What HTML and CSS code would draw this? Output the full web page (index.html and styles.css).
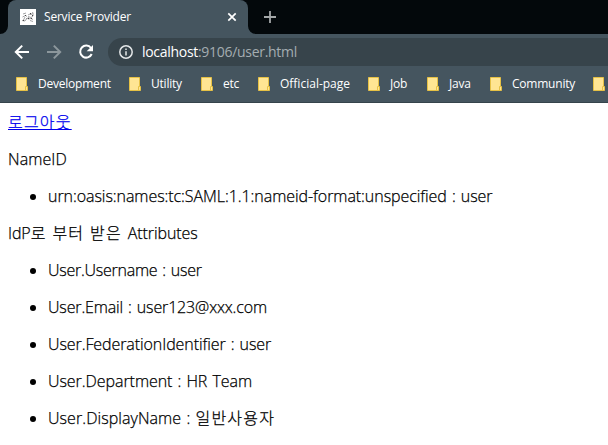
FILE: index.html
```html
<!DOCTYPE html>
<html lang="ko">
<head>
<meta charset="utf-8">
<title>Service Provider</title>
<link rel="stylesheet" href="styles.css">
</head>
<body>
<svg class="defs" width="0" height="0" aria-hidden="true">
  <symbol id="folder" viewBox="0 0 12 14">
    <path d="M.5.5h10v9h1v4H.5z" fill="#ffe593" stroke="#e6c145"/>
    <path d="M9.5 13v-3.5h1.5" fill="none" stroke="#e6c145"/>
  </symbol>
</svg>
<header class="browser">
  <div class="tabs">
    <svg class="curve" viewBox="0 0 8 8"><path d="M8 0v8H0a8 8 0 0 0 8-8z"/></svg>
    <div class="tab">
      <svg class="favicon" viewBox="0 0 16 16">
        <path fill="#fff" d="M0 0h16v16H0z"/>
        <g fill="none" stroke="#8b8b8e" stroke-width=".8">
          <path d="M3 5l3-1M2.500 8l3-1.500 1.500 1M5 8l-1.500 3M2 11.500l3 .5 2-3M8 6l2-1 1 1 2-3M13 4v3l-2 1.500-3-1M8 10l3-.5 2 1M10 11.500l3 1M6 10l3-1.500"/>
        </g>
        <path d="M5 6h1v1H5zM10 4h1v1h-1zM8 9h1v1H8zM3 11h1v1H3zM12 6h1v1h-1zM11 9h1v1h-1z" fill="#444"/>
      </svg>
      <span class="tab-title">Service Provider</span>
      <svg class="close" viewBox="0 0 10 10"><path d="M1.3 1.3l7.4 7.4M8.7 1.3L1.3 8.7"/></svg>
    </div>
    <svg class="curve" viewBox="0 0 8 8"><path d="M0 0v8h8a8 8 0 0 1-8-8z"/></svg>
    <svg class="plus" viewBox="0 0 12 12"><path d="M6 0v12M0 6h12"/></svg>
  </div>
  <div class="toolbar">
    <svg class="nav" viewBox="0 0 16 16"><path d="M15 8H2M8.2 1.6L1.8 8l6.4 6.4"/></svg>
    <svg class="nav dim" viewBox="0 0 16 16"><path d="M1 8h13M7.8 1.6L14.2 8l-6.4 6.4"/></svg>
    <svg class="nav" viewBox="0 0 16 16"><path d="M13 4A6 6 0 1 0 13.7 10"/><path class="solid" d="M15 1v6.300H8.700z"/></svg>
    <div class="address">
      <svg class="info" viewBox="0 0 14 14"><circle cx="7" cy="7" r="6.2"/><path d="M7 6.200v4.200M7 3.400v1.600"/></svg>
      <span class="url"><span class="host">localhost</span>:9106/user.html</span>
    </div>
  </div>
  <nav class="bookmarks">
    <span class="mark"><svg><use href="#folder"/></svg><b>Development</b></span>
    <span class="mark"><svg><use href="#folder"/></svg><b>Utility</b></span>
    <span class="mark"><svg><use href="#folder"/></svg><b>etc</b></span>
    <span class="mark"><svg><use href="#folder"/></svg><b class="official">Official-page</b></span>
    <span class="mark"><svg><use href="#folder"/></svg><b>Job</b></span>
    <span class="mark"><svg><use href="#folder"/></svg><b>Java</b></span>
    <span class="mark"><svg><use href="#folder"/></svg><b>Community</b></span>
    <span class="mark"><svg><use href="#folder"/></svg></span>
  </nav>
</header>
<main>
  <a href="#">로그아웃</a>
  <p class="name-id">NameID</p>
  <ul><li class="urn">urn:oasis:names:tc:SAML:1.1:nameid-format:unspecified : user</li></ul>
  <p class="idp">IdP<span class="ko">로 부터 받은 </span>Attributes</p>
  <ul>
    <li class="username">User.Username : user</li>
    <li class="email">User.Email : user123@xxx.com</li>
    <li class="federation">User.FederationIdentifier : user</li>
    <li class="department">User.Department : HR Team</li>
    <li class="display-name">User.DisplayName : <span class="ko">일반사용자</span></li>
  </ul>
</main>
</body>
</html>
```
FILE: styles.css
```css
* { box-sizing: border-box; }
body {
  margin: 0;
  height: 445px;
  overflow: hidden;
  background: #fff;
  color: #000;
  font-family: "Open Sans", "Noto Sans CJK KR", sans-serif;
}
svg { display: block; flex: none; }
.defs { position: absolute; }
.browser { height: 103px; background: #45555f; border-bottom: 1px solid #35434b; overflow: hidden; }
.tabs { height: 34px; background: #03080b; display: flex; align-items: flex-end; }
.curve { width: 8px; height: 8px; fill: #45555f; }
.tab {
  width: 240px; height: 34px; padding: 0 11px 0 12px;
  display: flex; align-items: center;
  background: #45555f; border-radius: 8px 8px 0 0;
}
.favicon { width: 16px; height: 16px; }
.tab-title { flex: 1; margin: -1px 0 0 8px; color: #fff; font-size: 12px; letter-spacing: -.2px; white-space: nowrap; }
.close { width: 10px; height: 10px; stroke: #fff; stroke-width: 1.7; }
.plus { width: 12px; height: 12px; margin: 0 0 11px 8px; stroke: #a3a7a8; stroke-width: 1.8; }
.toolbar { height: 36px; display: flex; align-items: center; padding-left: 14px; }
.nav { width: 16px; height: 16px; margin-right: 16px; fill: none; stroke: #fff; stroke-width: 2; }
.nav .solid { fill: #fff; stroke: none; }
.dim { stroke: #8c979c; }
.address {
  flex: 1; height: 28px; margin-left: -2px; padding-left: 11px;
  display: flex; align-items: center;
  background: #37444b; border-radius: 14px 0 0 14px;
}
.info { width: 14px; height: 14px; fill: none; stroke: #e4e7e8; stroke-width: 1.5; }
.url { margin: -1px 0 0 9px; font-size: 14px; letter-spacing: -.3px; color: #a4adb1; white-space: nowrap; }
.host { color: #fff; }
.bookmarks {
  height: 28px; padding: 0 0 1px 16px;
  display: grid; align-items: center;
  grid-template-columns: 113px 72px 57px 110px 59px 63px 103px 15px;
}
.mark { display: flex; align-items: center; }
.mark svg { width: 12px; height: 14px; }
.mark b { margin-left: 10px; color: #fff; font-size: 12px; font-weight: 400; letter-spacing: -.22px; white-space: nowrap; }
.mark .official { letter-spacing: 0; }
main {
  padding: 9px 8px 0;
  font-size: 16px; font-weight: 300; line-height: 21px;
  word-spacing: 1px;
  -webkit-text-stroke: .25px currentColor;
}
a { display: block; width: max-content; color: #00e; letter-spacing: 1.2px; }
p { margin: 16px 0; }
ul { margin: 16px 0; padding-left: 40px; }
li { margin: 0 0 16px; white-space: nowrap; }
.name-id { letter-spacing: .1px; }
.urn { letter-spacing: -.06px; }
.idp { letter-spacing: -.1px; }
.username { letter-spacing: -.25px; }
.email { letter-spacing: -.14px; }
.federation { letter-spacing: -.08px; }
.department { letter-spacing: -.05px; }
.display-name { letter-spacing: .07px; }
.ko { letter-spacing: 1.2px; word-spacing: .5px; }
```
